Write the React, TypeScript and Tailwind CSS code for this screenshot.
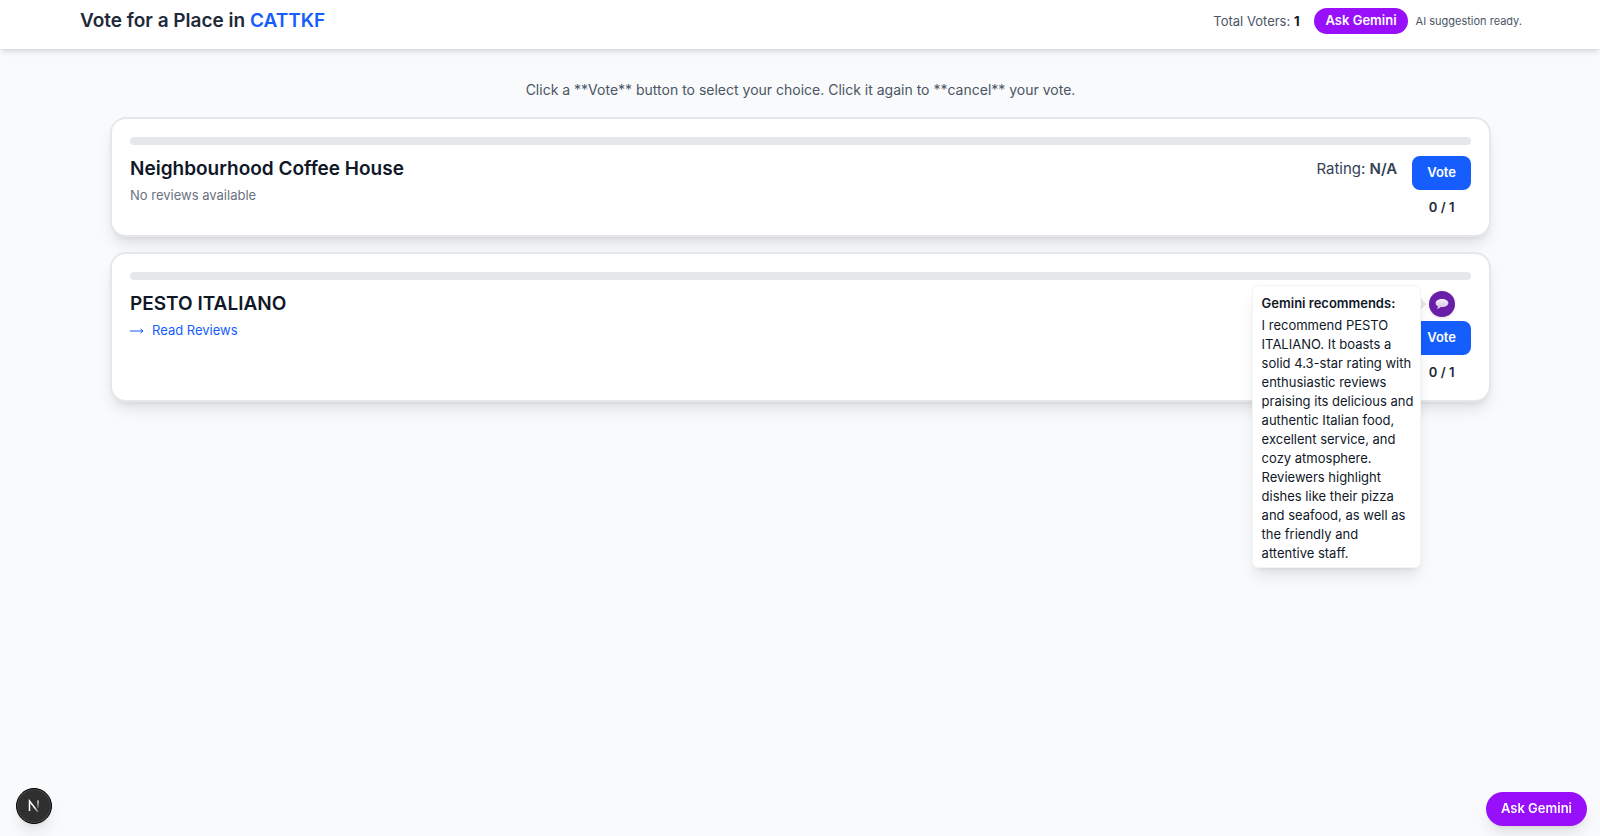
import { useState } from "react";

type Place = {
    id: string;
    name: string;
    rating: string;
    hasReviews: boolean;
    recommendation?: string;
};

const places: Place[] = [
    { id: "coffee", name: "Neighbourhood Coffee House", rating: "N/A", hasReviews: false },
    {
        id: "pesto",
        name: "PESTO ITALIANO",
        rating: "4.3",
        hasReviews: true,
        recommendation:
            "I recommend PESTO\nITALIANO. It boasts a\nsolid 4.3-star rating with\nenthusiastic reviews\npraising its delicious and\nauthentic Italian food,\nexcellent service, and\ncozy atmosphere.\nReviewers highlight\ndishes like their pizza\nand seafood, as well as\nthe friendly and\nattentive staff.",
    },
];

const totalVoters = 1;

function SpeechBubble() {
    return (
        <svg viewBox="0 0 14 12" className="w-[14px] h-[12px]" aria-hidden="true">
            <defs>
                <linearGradient id="bubble" x1="0" y1="0" x2="0" y2="1">
                    <stop offset="0" stopColor="#f6f0fb" />
                    <stop offset="1" stopColor="#d3bde6" />
                </linearGradient>
            </defs>
            <path
                d="M7 1C3.4 1 .6 2.7 .6 5c0 1.4.9 2.6 2.3 3.3-.1 1.1-.4 1.8-1 2.5 1.5-.1 2.9-.7 3.8-1.8.4.1.9.1 1.3.1 3.6 0 6.4-1.8 6.4-4.1S10.6 1 7 1Z"
                fill="url(#bubble)"
            />
        </svg>
    );
}

function Recommendation({ text }: { text: string }) {
    return (
        <div className="relative mb-1 flex">
            <button
                type="button"
                aria-label="Gemini recommendation"
                className="w-[26px] h-[26px] rounded-full bg-[#6b1fa8] flex items-center justify-center shadow"
            >
                <SpeechBubble />
            </button>
            <div className="absolute right-full -top-[6px] z-10 mr-2">
                <div className="absolute top-[15px] -right-1 w-2 h-2 rotate-45 bg-gray-200" />
                <div className="relative w-[169px] rounded-md border border-gray-100 bg-white px-[9px] pt-2 pb-1 text-[13px] leading-[19px] text-gray-900 shadow-lg">
                    <p className="mb-[3px] font-semibold">Gemini recommends:</p>
                    <p className="whitespace-pre">{text}</p>
                </div>
            </div>
        </div>
    );
}

function PlaceCard({ place, voted, onVote }: { place: Place; voted: boolean; onVote: () => void }) {
    const count = voted ? 1 : 0;

    return (
        <li className="rounded-2xl border-2 border-gray-200 bg-white p-[18px] shadow-lg">
            <div className="h-2 rounded-full bg-gray-200 overflow-hidden">
                <div className="h-full bg-blue-600" style={{ width: `${(count / totalVoters) * 100}%` }} />
            </div>
            <div className="mt-[11px] flex justify-between">
                <div>
                    <h2 className="text-[19px] leading-[26px] font-semibold text-gray-900">{place.name}</h2>
                    {place.hasReviews ? (
                        <a href="#reviews" className="mt-1 flex items-center gap-2 text-[13px] leading-[19px] text-blue-600">
                            <svg viewBox="0 0 14 8" className="w-[14px] h-2" fill="none" stroke="currentColor" aria-hidden="true">
                                <path d="M0 4h13M10.5 2 13 4l-2.5 2" />
                            </svg>
                            Read Reviews
                        </a>
                    ) : (
                        <p className="mt-1 text-[13px] leading-[19px] text-gray-500">No reviews available</p>
                    )}
                </div>
                <div className="flex gap-[15px]">
                    {/* the open recommendation takes the rating's place */}
                    {!place.recommendation && (
                        <p className="text-[15px] leading-[26px] text-gray-700">
                            Rating: <span className="font-semibold">{place.rating}</span>
                        </p>
                    )}
                    <div className="flex flex-col items-center">
                        {place.recommendation && <Recommendation text={place.recommendation} />}
                        <button
                            type="button"
                            onClick={onVote}
                            className="h-[34px] rounded-lg bg-[#155dfc] px-[15px] text-[13px] font-semibold text-white"
                        >
                            {voted ? "Cancel" : "Vote"}
                        </button>
                        <span className="mt-2 text-[13px] leading-[19px] font-semibold text-gray-800">
                            {count} / {totalVoters}
                        </span>
                    </div>
                </div>
            </div>
        </li>
    );
}

export default function App() {
    const [vote, setVote] = useState<string | null>(null);

    return (
        <div className="min-h-screen bg-gray-50 font-['Inter',sans-serif]">
            <header className="bg-white pl-20 pr-[78px] pt-2 pb-[15px] shadow-md">
                <div className="flex items-center justify-between">
                    <h1 className="text-[19px] leading-[26px] font-semibold text-gray-800">
                        Vote for a Place in <span className="text-[#155dfc]">CATTKF</span>
                    </h1>
                    <div className="flex items-center">
                        <p className="text-[13px] leading-[19px] text-gray-600">
                            Total Voters: <span className="font-bold text-gray-900">{totalVoters}</span>
                        </p>
                        <button type="button" className="ml-[15px] h-[26px] rounded-full bg-[#9810fa] px-[11px] text-[13px] font-semibold text-white">
                            Ask Gemini
                        </button>
                        <span className="ml-2 text-[11px] leading-4 text-gray-600">AI suggestion ready.</span>
                    </div>
                </div>
            </header>

            <main className="pl-[110px] pr-[109px] pt-[30px]">
                <p className="text-center text-[14px] leading-[22px] text-gray-600">
                    Click a **Vote** button to select your choice. Click it again to **cancel** your vote.
                </p>
                <ul className="mt-4 space-y-[15px]">
                    {places.map((place) => (
                        <PlaceCard
                            key={place.id}
                            place={place}
                            voted={vote === place.id}
                            onVote={() => setVote(vote === place.id ? null : place.id)}
                        />
                    ))}
                </ul>
            </main>

            <button
                type="button"
                aria-label="Open dev tools"
                className="fixed bottom-3 left-4 w-9 h-9 rounded-full border border-black bg-[#2f2f2f] flex items-center justify-center shadow-lg ring-1 ring-inset ring-[#4a4a4a]"
            >
                <svg viewBox="0 0 14 14" className="w-[14px] h-[14px]" fill="none" strokeWidth="1.5" aria-hidden="true">
                    <defs>
                        <linearGradient id="fade" x1="0" y1="1" x2="0" y2="12" gradientUnits="userSpaceOnUse">
                            <stop offset="0" stopColor="#fff" />
                            <stop offset="0.8" stopColor="#fff" stopOpacity="0.1" />
                        </linearGradient>
                        <linearGradient id="stem" x1="2" y1="1" x2="12" y2="13" gradientUnits="userSpaceOnUse">
                            <stop offset="0.6" stopColor="#fff" />
                            <stop offset="1" stopColor="#fff" stopOpacity="0.2" />
                        </linearGradient>
                    </defs>
                    <path d="M2.5 12V2l8.5 11" stroke="url(#stem)" />
                    <path d="M11 1.5V9" stroke="url(#fade)" />
                </svg>
            </button>

            <button
                type="button"
                className="fixed bottom-[10px] right-[13px] h-[34px] rounded-full bg-[#9810fa] px-[15px] text-[13px] font-semibold text-white shadow-lg"
            >
                Ask Gemini
            </button>
        </div>
    );
}
